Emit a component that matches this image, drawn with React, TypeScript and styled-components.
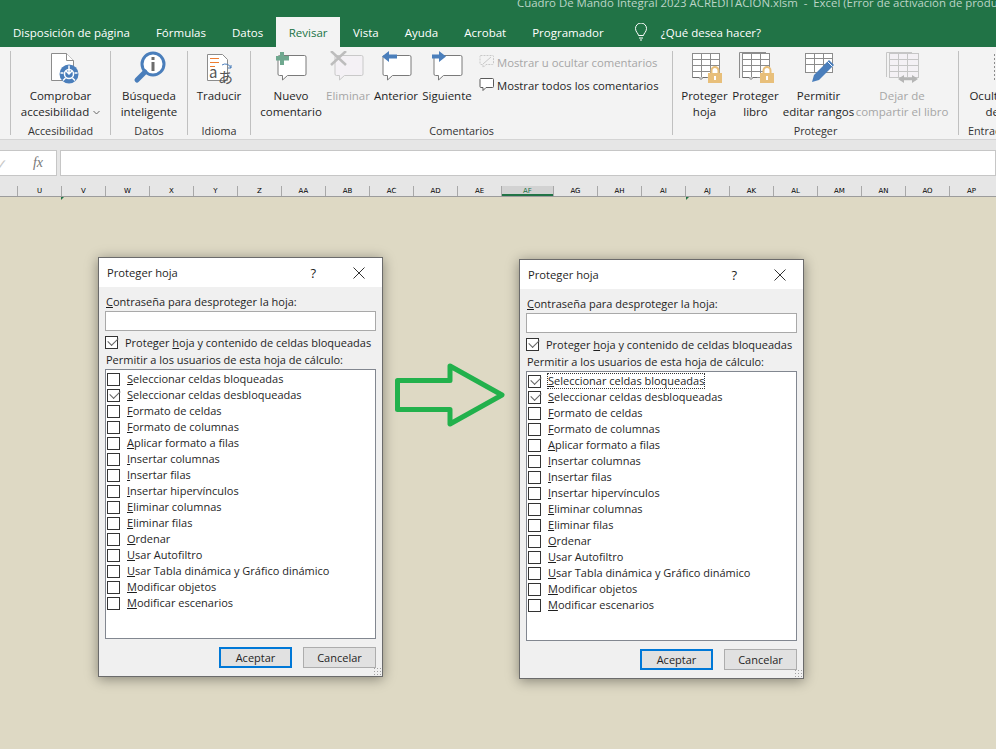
import { ReactNode } from 'react';

import styled, { createGlobalStyle } from 'styled-components';

const FONT = '"Open Sans", "Noto Sans", "Liberation Sans", sans-serif';
const BLUE = '#4a7ebb';
const GOLD = '#e8bf7a';
const LINE = '#7a7a7a';

const TABS = [
  'Disposición de página',
  'Fórmulas',
  'Datos',
  'Revisar',
  'Vista',
  'Ayuda',
  'Acrobat',
  'Programador',
];

const COLUMNS = [
  'U', 'V', 'W', 'X', 'Y', 'Z', 'AA', 'AB', 'AC', 'AD', 'AE', 'AF', 'AG',
  'AH', 'AI', 'AJ', 'AK', 'AL', 'AM', 'AN', 'AO', 'AP',
];

const PERMISSIONS = [
  ['S', 'eleccionar celdas bloqueadas'],
  ['S', 'eleccionar celdas desbloqueadas'],
  ['F', 'ormato de celdas'],
  ['F', 'ormato de columnas'],
  ['A', 'plicar formato a filas'],
  ['I', 'nsertar columnas'],
  ['I', 'nsertar filas'],
  ['I', 'nsertar hipervínculos'],
  ['E', 'liminar columnas'],
  ['E', 'liminar filas'],
  ['O', 'rdenar'],
  ['U', 'sar Autofiltro'],
  ['U', 'sar Tabla dinámica y Gráfico dinámico'],
  ['M', 'odificar objetos'],
  ['M', 'odificar escenarios'],
];

function Bubble({ color = LINE, fill = '#fff', x = 11 }: { color?: string; fill?: string; x?: number }) {
  return (
    <path
      d={`M${x + 1.5} 4.5h25a1.500 1.500 0 0 1 1.500 1.500v17a1.500 1.500 0 0 1-1.500 1.500h-17l-5 4.500v-4.500h-3a1.500 1.500 0 0 1-1.500-1.500v-17a1.500 1.500 0 0 1 1.500-1.500z`}
      fill={fill}
      stroke={color}
    />
  );
}

function CommentIcon({ kind }: { kind: 'new' | 'delete' | 'prev' | 'next' }) {
  return (
    <svg width="48" height="34" viewBox="0 0 48 34">
      <Bubble color={kind === 'delete' ? '#c9c9c9' : LINE} fill={kind === 'delete' ? '#f4f1f5' : '#fff'} />
      {kind === 'new' && <path d="M13 1h4v4h5v4.500h-5V14h-4V9.500H9V5h4z" fill="#6fa88f" />}
      {kind === 'delete' && <path d="M7 0l15 14M22 0L7 14" stroke="#bdbdbd" strokeWidth="2.500" fill="none" />}
      {kind === 'prev' && <path d="M17 0L10 5.500l7 5.500V7.500h8v-4h-8z" fill={BLUE} />}
      {kind === 'next' && <path d="M16 0l7 5.500-7 5.500V7.500H9v-4h7z" fill={BLUE} />}
    </svg>
  );
}

function Grid({ color = '#8c8c8c', fill = '#fff', x = 5, w = 27, h = 24 }: { color?: string; fill?: string; x?: number; w?: number; h?: number }) {
  const rows = h > 20 ? [8.5, 14.5, 20.5] : [7.5, 13.5];
  return (
    <g stroke={color} fill="none">
      <rect x={x + 0.5} y={2.5} width={w} height={h} fill={fill} />
      <path d={rows.map((y) => `M${x} ${y}h${w}`).join('') + `M${x + 9.5} 2.500v${h}M${x + 18.5} 2.500v${h}`} />
    </g>
  );
}

function SheetTab({ x }: { x: number }) {
  return <path d={`M${x} 26.500h6l2 2 2-2h4`} fill="#fff" stroke="#6d6d6d" />;
}

function Lock({ x }: { x: number }) {
  return (
    <g>
      <path d={`M${x + 3.5} 23v-3.500a3.500 3.500 0 0 1 7 0v3.500`} fill="#fff" stroke={GOLD} strokeWidth="2" />
      <rect x={x} y={22} width={14} height={10} fill={GOLD} />
      <rect x={x + 6} y={25} width={2} height={4} fill="#fff" />
    </g>
  );
}

function AccessibilityIcon() {
  return (
    <svg width="36" height="34" viewBox="0 0 36 34">
      <path d="M8.500 2.500h15l7 7v20h-22z" fill="#fff" stroke="#8c8c8c" />
      <path d="M23.500 2.500v7h7" fill="#fff" stroke="#8c8c8c" />
      <circle cx="26" cy="23" r="9.500" fill={BLUE} />
      <circle cx="26" cy="23" r="4.500" fill="none" stroke="#fff" strokeWidth="1.500" />
      <path d="M26 14.500v8M23 20l3 3 3-3M17.500 22h3M31.500 22h3M20 29.500l2.500-2.500M32 29.500L29.500 27" stroke="#fff" strokeWidth="1.500" fill="none" />
    </svg>
  );
}

function SearchIcon() {
  return (
    <svg width="36" height="34" viewBox="0 0 36 34">
      <circle cx="22" cy="13" r="11" fill="#fff" stroke={BLUE} strokeWidth="3" />
      <path d="M14 21L6 29" stroke={BLUE} strokeWidth="5" strokeLinecap="round" />
      <rect x="20.500" y="11" width="3" height="9" fill="#6d6d6d" />
      <rect x="20.500" y="6" width="3" height="3" fill="#6d6d6d" />
    </svg>
  );
}

function TranslateIcon() {
  return (
    <svg width="36" height="34" viewBox="0 0 36 34">
      <path d="M6.500 3.500h15l5 5v21h-20z" fill="#fff" stroke="#8c8c8c" />
      <path d="M9 7.500h9M9 11.500h9M9 15.500h5" stroke="#ed7d31" />
      <path d="M21 14a6 6 0 0 1 9 3M30 14v3h-3" fill="none" stroke={BLUE} />
      <SvgGlyph x={8} y={27} size={15}>a</SvgGlyph>
      <SvgGlyph x={17} y={32} size={15}>あ</SvgGlyph>
    </svg>
  );
}

function ProtectSheetIcon() {
  return (
    <svg width="36" height="34" viewBox="0 0 36 34">
      <Grid />
      <SheetTab x={6} />
      <Lock x={21} />
    </svg>
  );
}

function ProtectBookIcon() {
  return (
    <svg width="40" height="34" viewBox="0 0 40 34">
      <path d="M3.500 27V1.500H30" fill="none" stroke="#8c8c8c" />
      <Grid x={6} w={27} />
      <SheetTab x={7} />
      <Lock x={24} />
    </svg>
  );
}

function EditRangesIcon() {
  return (
    <svg width="36" height="34" viewBox="0 0 36 34">
      <Grid x={4} h={19} />
      <path d="M11 31l2-7 15-15 5 5-15 15z" fill={BLUE} />
      <path d="M26.500 10.500l5 5" stroke="#fff" />
    </svg>
  );
}

function ShareIcon() {
  return (
    <svg width="40" height="34" viewBox="0 0 40 34">
      <path d="M4.500 26V1.500H30" fill="none" stroke="#c6c6c6" />
      <Grid x={7} w={29} color="#c6c6c6" fill="#f4f1f5" />
      <path d="M18 28h16" stroke="#b5b5b5" strokeWidth="2.500" />
      <path d="M22 24l-6 4 6 4zM30 24l6 4-6 4z" fill="#b5b5b5" />
    </svg>
  );
}

function InkIcon() {
  return (
    <svg width="36" height="34" viewBox="0 0 36 34">
      <path d="M9.500 3v26" fill="none" stroke="#8c8c8c" strokeDasharray="2 2" />
    </svg>
  );
}

function SmallBubble({ muted }: { muted?: boolean }) {
  return (
    <svg width="16" height="16" viewBox="0 0 16 16">
      <path
        d="M1.500 1.500h12a1 1 0 0 1 1 1v7a1 1 0 0 1-1 1H7l-3 3v-3H2a1 1 0 0 1-1-1v-7z"
        fill={muted ? 'none' : '#fff'}
        stroke={muted ? '#c9c9c9' : '#5a5a5a'}
        strokeDasharray={muted ? '2 1' : undefined}
      />
      {muted && <path d="M4 10l8-7" stroke="#c9c9c9" />}
    </svg>
  );
}

function Arrow() {
  return (
    <ArrowSvg width="112" height="66" viewBox="0 0 112 66">
      <polygon
        points="3.500,17.500 56,17.500 56,3 108,32 56,61 56,46.500 3.500,46.500"
        fill="none"
        stroke="#22b14c"
        strokeWidth="5"
        strokeLinejoin="round"
      />
    </ArrowSvg>
  );
}

function RibbonButton({
  icon,
  lines,
  width,
  disabled,
}: {
  icon: ReactNode;
  lines: ReactNode[];
  width: number;
  disabled?: boolean;
}) {
  return (
    <ToolButton $width={width} $disabled={disabled}>
      <IconSlot>{icon}</IconSlot>
      {lines.map((line, i) => (
        <span key={i}>{line}</span>
      ))}
    </ToolButton>
  );
}

function Group({
  children,
  label,
  $width,
  $pad = 0,
  $alignLeft,
}: {
  children: ReactNode;
  label: string;
  $width: number;
  $pad?: number;
  $alignLeft?: boolean;
}) {
  return (
    <GroupBox $width={$width}>
      <GroupTools $pad={$pad}>{children}</GroupTools>
      <GroupLabel $alignLeft={$alignLeft}>{label}</GroupLabel>
    </GroupBox>
  );
}

function SvgGlyph({ children, x, y, size }: { children: string; x: number; y: number; size: number }) {
  return (
    <text x={x} y={y} fontSize={size} fill="#555" fontFamily='"Noto Sans CJK JP", "Noto Sans", sans-serif'>
      {children}
    </text>
  );
}

function ProtectDialog({ checked, focused, $top }: { checked: number[]; focused?: number; $top: number }) {
  return (
    <Dialog $top={$top}>
      <DialogTitle>
        <span>Proteger hoja</span>
        <TitleActions>
          <span>?</span>
          <svg width="12" height="12" viewBox="0 0 12 12">
            <path d="M.5.5l11 11M11.500.5l-11 11" stroke="#333" fill="none" />
          </svg>
        </TitleActions>
      </DialogTitle>
      <DialogBody>
        <Caption>
          <u>C</u>ontraseña para desproteger la hoja:
        </Caption>
        <PasswordInput />
        <ProtectRow>
          <CheckBox $checked />
          <span>
            Proteger <u>h</u>oja y contenido de celdas bloqueadas
          </span>
        </ProtectRow>
        <Caption>Permitir a los usuarios de esta hoja de cálculo:</Caption>
        <PermissionList>
          {PERMISSIONS.map(([key, rest], i) => (
            <PermissionRow key={i}>
              <CheckBox $checked={checked.includes(i)} />
              <PermissionLabel $focused={focused === i}>
                <u>{key}</u>
                {rest}
              </PermissionLabel>
            </PermissionRow>
          ))}
        </PermissionList>
        <DialogActions>
          <DialogButton $primary>Aceptar</DialogButton>
          <DialogButton>Cancelar</DialogButton>
        </DialogActions>
        <Grip />
      </DialogBody>
    </Dialog>
  );
}

export default function App() {
  return (
    <>
      <GlobalStyle />
      <Window>
        <TitleBar>Cuadro De Mando Integral 2023 ACREDITACIÓN.xlsm  -  Excel (Error de activación de productos)</TitleBar>
        <TabBar>
          {TABS.map((tab) => (
            <Tab key={tab} $active={tab === 'Revisar'}>
              {tab}
            </Tab>
          ))}
          <TellMe>
            <svg width="14" height="18" viewBox="0 0 14 18">
              <path
                d="M4.500 12.500c0-2-3-3.500-3-7a5.500 5.500 0 0 1 11 0c0 3.500-3 5-3 7zM5 15h4M6 17h2"
                fill="none"
                stroke="#fff"
              />
            </svg>
            ¿Qué desea hacer?
          </TellMe>
        </TabBar>
        <Ribbon>
          <RibbonEdge />
          <Group $width={100} label="Accesibilidad">
            <RibbonButton
              width={99}
              icon={<AccessibilityIcon />}
              lines={[
                'Comprobar',
                <CaretLine>
                  accesibilidad
                  <svg width="7" height="5" viewBox="0 0 7 5">
                    <path d="M.5 1l3 3 3-3" fill="none" stroke="#666" />
                  </svg>
                </CaretLine>,
              ]}
            />
          </Group>
          <Group $width={77} label="Datos">
            <RibbonButton width={76} icon={<SearchIcon />} lines={['Búsqueda', 'inteligente']} />
          </Group>
          <Group $width={63} label="Idioma">
            <RibbonButton width={62} icon={<TranslateIcon />} lines={['Traducir']} />
          </Group>
          <Group $width={422} $pad={8} label="Comentarios">
            <RibbonButton width={64} icon={<CommentIcon kind="new" />} lines={['Nuevo', 'comentario']} />
            <RibbonButton width={50} disabled icon={<CommentIcon kind="delete" />} lines={['Eliminar']} />
            <RibbonButton width={46} icon={<CommentIcon kind="prev" />} lines={['Anterior']} />
            <RibbonButton width={56} icon={<CommentIcon kind="next" />} lines={['Siguiente']} />
            <SideActions>
              <SideAction $disabled>
                <SmallBubble muted />
                Mostrar u ocultar comentarios
              </SideAction>
              <SideAction>
                <SmallBubble />
                Mostrar todos los comentarios
              </SideAction>
            </SideActions>
          </Group>
          <Group $width={286} $pad={6} label="Proteger">
            <RibbonButton width={51} icon={<ProtectSheetIcon />} lines={['Proteger', 'hoja']} />
            <RibbonButton width={51} icon={<ProtectBookIcon />} lines={['Proteger', 'libro']} />
            <RibbonButton width={75} icon={<EditRangesIcon />} lines={['Permitir', 'editar rangos']} />
            <RibbonButton width={92} disabled icon={<ShareIcon />} lines={['Dejar de', 'compartir el libro']} />
          </Group>
          <Group $width={88} label="Entrada de lápiz" $alignLeft>
            <RibbonButton width={88} icon={<InkIcon />} lines={['Ocultar tinta', <InkLine>de lápiz</InkLine>]} />
          </Group>
        </Ribbon>
        <FormulaBand>
          <NameBox>
            <FadedCheck>✓</FadedCheck>
            <FxMark>fx</FxMark>
          </NameBox>
          <FormulaInput />
        </FormulaBand>
        <HeaderRow>
          {COLUMNS.map((col) => (
            <ColumnHead key={col} $selected={col === 'AF'}>
              {col}
            </ColumnHead>
          ))}
        </HeaderRow>
        <Desk>
          <CommentMark $left={61} />
          <CommentMark $left={686} />
          <ProtectDialog checked={[1]} $top={0} />
          <Arrow />
          <ProtectDialog checked={[0, 1]} focused={0} $top={2} />
        </Desk>
      </Window>
    </>
  );
}

const GlobalStyle = createGlobalStyle`
  html, body {
    margin: 0;
    padding: 0;
    overflow: hidden;
  }

  body {
    font-family: ${FONT};
    font-size: 11px;
    color: #1f1f1f;
  }

  u {
    text-underline-offset: 1px;
  }
`;

const Window = styled.div`
  width: 996px;
  height: 749px;
  overflow: hidden;
  display: flex;
  flex-direction: column;
  background: #ded9c4;
`;

const TitleBar = styled.div`
  height: 17px;
  flex-shrink: 0;
  background: #217346;
  color: #bcd5c7;
  padding-left: 517px;
  line-height: 6px;
  white-space: pre;
  overflow: hidden;
  font-size: 11.4px;
`;

const TabBar = styled.div`
  height: 30px;
  background: #217346;
  display: flex;
  flex-shrink: 0;
`;

const Tab = styled.div<{ $active?: boolean }>`
  padding: 0 ${(p) => (p.$active ? 12.5 : 13)}px;
  display: flex;
  align-items: center;
  color: ${(p) => (p.$active ? '#217346' : '#fff')};
  background: ${(p) => (p.$active ? '#f3f3f3' : 'transparent')};
  font-size: 11.5px;
  white-space: nowrap;
`;

const TellMe = styled.div`
  margin-left: 17px;
  display: flex;
  align-items: center;
  gap: 13px;
  color: #fff;
  font-size: 11.5px;
  white-space: nowrap;
`;

const Ribbon = styled.div`
  height: 92px;
  flex-shrink: 0;
  box-sizing: border-box;
  background: #f3f3f3;
  display: flex;
  padding-top: 4px;
  font-size: 11.5px;
`;

const RibbonEdge = styled.div`
  width: 10px;
  flex-shrink: 0;
`;

const GroupBox = styled.section<{ $width: number }>`
  width: ${(p) => p.$width}px;
  flex-shrink: 0;
  box-sizing: border-box;
  height: 84px;
  border-left: 1px solid #c0c0c0;
  display: flex;
  flex-direction: column;
`;

const GroupTools = styled.div<{ $pad: number }>`
  height: 72px;
  flex-shrink: 0;
  display: flex;
  padding-left: ${(p) => p.$pad}px;
`;

const GroupLabel = styled.div<{ $alignLeft?: boolean }>`
  text-align: ${(p) => (p.$alignLeft ? 'left' : 'center')};
  padding-left: ${(p) => (p.$alignLeft ? '9px' : '0')};
  line-height: 16px;
  white-space: nowrap;
  color: #333;
  font-size: 10.8px;
`;

const ToolButton = styled.div<{ $width: number; $disabled?: boolean }>`
  width: ${(p) => p.$width}px;
  flex-shrink: 0;
  display: flex;
  flex-direction: column;
  align-items: center;
  line-height: 16px;
  white-space: nowrap;
  color: ${(p) => (p.$disabled ? '#a6a6a6' : '#1f1f1f')};
`;

const IconSlot = styled.div`
  height: 34px;
  margin-bottom: 3px;
  display: flex;
  justify-content: center;
`;

const CaretLine = styled.span`
  display: inline-flex;
  align-items: center;
  gap: 4px;
`;

const InkLine = styled.span`
  padding-left: 6px;
`;

const SideActions = styled.div`
  margin-left: 4px;
  display: flex;
  flex-direction: column;
  gap: 7px;
  padding-top: 3px;
  font-size: 11.3px;
`;

const SideAction = styled.div<{ $disabled?: boolean }>`
  display: flex;
  align-items: center;
  gap: 2px;
  height: 16px;
  white-space: nowrap;
  color: ${(p) => (p.$disabled ? '#a6a6a6' : '#1f1f1f')};
`;

const FormulaBand = styled.div`
  height: 47px;
  flex-shrink: 0;
  box-sizing: border-box;
  background: #e6e6e6;
  border-top: 1px solid #d4d4d4;
  padding-top: 10px;
  display: flex;
  gap: 3px;
`;

const NameBox = styled.div`
  width: 57px;
  height: 26px;
  box-sizing: border-box;
  background: #fff;
  border: 1px solid #c6c6c6;
  border-left: 0;
  display: flex;
  align-items: center;
  justify-content: space-between;
  padding-right: 13px;
`;

const FadedCheck = styled.span`
  color: #c8c8c8;
  font-size: 14px;
  margin-left: -4px;
`;

const FxMark = styled.span`
  font-family: 'Liberation Serif', serif;
  font-style: italic;
  font-size: 14px;
  color: #777;
`;

const FormulaInput = styled.div`
  flex: 1;
  height: 26px;
  box-sizing: border-box;
  background: #fff;
  border: 1px solid #c6c6c6;
`;

const HeaderRow = styled.div`
  height: 11px;
  flex-shrink: 0;
  box-sizing: border-box;
  background: #e6e6e6;
  border-bottom: 1px solid #9c9c9c;
  padding-left: 17px;
  display: flex;
`;

const ColumnHead = styled.div<{ $selected?: boolean }>`
  width: ${(p) => (p.$selected ? 52 : 44)}px;
  flex-shrink: 0;
  box-sizing: border-box;
  border-left: 1px solid #a8a8a8;
  text-align: center;
  font-family: 'DejaVu Sans', sans-serif;
  font-size: 7px;
  line-height: 10px;
  color: ${(p) => (p.$selected ? '#217346' : '#000')};
  background: ${(p) => (p.$selected ? '#d2d2d2' : 'transparent')};
  box-shadow: ${(p) => (p.$selected ? 'inset 0 -2px 0 #217346' : 'none')};
`;

const Desk = styled.main`
  position: relative;
  flex: 1;
  display: flex;
  align-items: flex-start;
  padding: 60px 0 0 98px;
  background: #ded9c4;
`;

const CommentMark = styled.i<{ $left: number }>`
  position: absolute;
  top: 0;
  left: ${(p) => p.$left}px;
  width: 0;
  height: 0;
  border-top: 3px solid #217346;
  border-right: 3px solid transparent;
`;

const ArrowSvg = styled.svg`
  flex-shrink: 0;
  margin: 106px 13px 0 11px;
`;

const Dialog = styled.div<{ $top: number }>`
  width: 285px;
  height: 420px;
  flex-shrink: 0;
  box-sizing: border-box;
  margin-top: ${(p) => p.$top}px;
  border: 1px solid #6b6b6b;
  background: #f0f0f0;
  box-shadow: 0 2px 12px rgba(0, 0, 0, 0.4);
  display: flex;
  flex-direction: column;
`;

const DialogTitle = styled.header`
  height: 29px;
  flex-shrink: 0;
  background: #fff;
  display: flex;
  align-items: center;
  justify-content: space-between;
  padding: 0 17px 0 8px;
  font-size: 11.2px;
`;

const TitleActions = styled.div`
  display: flex;
  align-items: center;
  gap: 37px;
  font-size: 13px;
`;

const DialogBody = styled.div`
  position: relative;
  flex: 1;
  padding: 7px 6px 0 6px;
  display: flex;
  flex-direction: column;
`;

const Caption = styled.div`
  height: 16px;
  line-height: 16px;
  padding-left: 1px;
  white-space: nowrap;
`;

const PasswordInput = styled.div`
  height: 20px;
  margin-top: 1px;
  box-sizing: border-box;
  background: #fff;
  border: 1px solid #a9a9a9;
`;

const ProtectRow = styled.div`
  height: 16px;
  margin: 3px 0 2px;
  display: flex;
  align-items: center;
  gap: 7px;
  white-space: nowrap;
`;

const CheckBox = styled.span<{ $checked?: boolean }>`
  width: 13px;
  height: 13px;
  flex-shrink: 0;
  box-sizing: border-box;
  background: #fff;
  border: 1px solid #333;
  position: relative;

  &::after {
    content: '';
    display: ${(p) => (p.$checked ? 'block' : 'none')};
    position: absolute;
    left: 1.5px;
    top: -0.5px;
    width: 9px;
    height: 5px;
    border-left: 1px solid #666;
    border-bottom: 1px solid #666;
    transform: rotate(-45deg) translate(-1px, 1px);
  }
`;

const PermissionList = styled.div`
  height: 270px;
  margin-top: 1px;
  box-sizing: border-box;
  padding: 1px 0 0 1px;
  background: #fff;
  border: 1px solid #828790;
`;

const PermissionRow = styled.div`
  height: 16px;
  display: flex;
  align-items: center;
  gap: 7px;
  white-space: nowrap;
`;

const PermissionLabel = styled.span<{ $focused?: boolean }>`
  line-height: 14px;
  outline: ${(p) => (p.$focused ? '1px dotted #333' : 'none')};
`;

const DialogActions = styled.div`
  margin-top: 8px;
  display: flex;
  justify-content: flex-end;
  gap: 11px;
`;

const DialogButton = styled.div<{ $primary?: boolean }>`
  width: 73px;
  height: 21px;
  box-sizing: border-box;
  display: flex;
  align-items: center;
  justify-content: center;
  background: #e1e1e1;
  border: ${(p) => (p.$primary ? '2px solid #0078d7' : '1px solid #adadad')};
`;

const Grip = styled.i`
  position: absolute;
  right: 1px;
  bottom: 1px;
  width: 8px;
  height: 8px;
  background: radial-gradient(circle, #a0a0a0 1px, transparent 1px) 0 0 / 3px 3px;
`;
